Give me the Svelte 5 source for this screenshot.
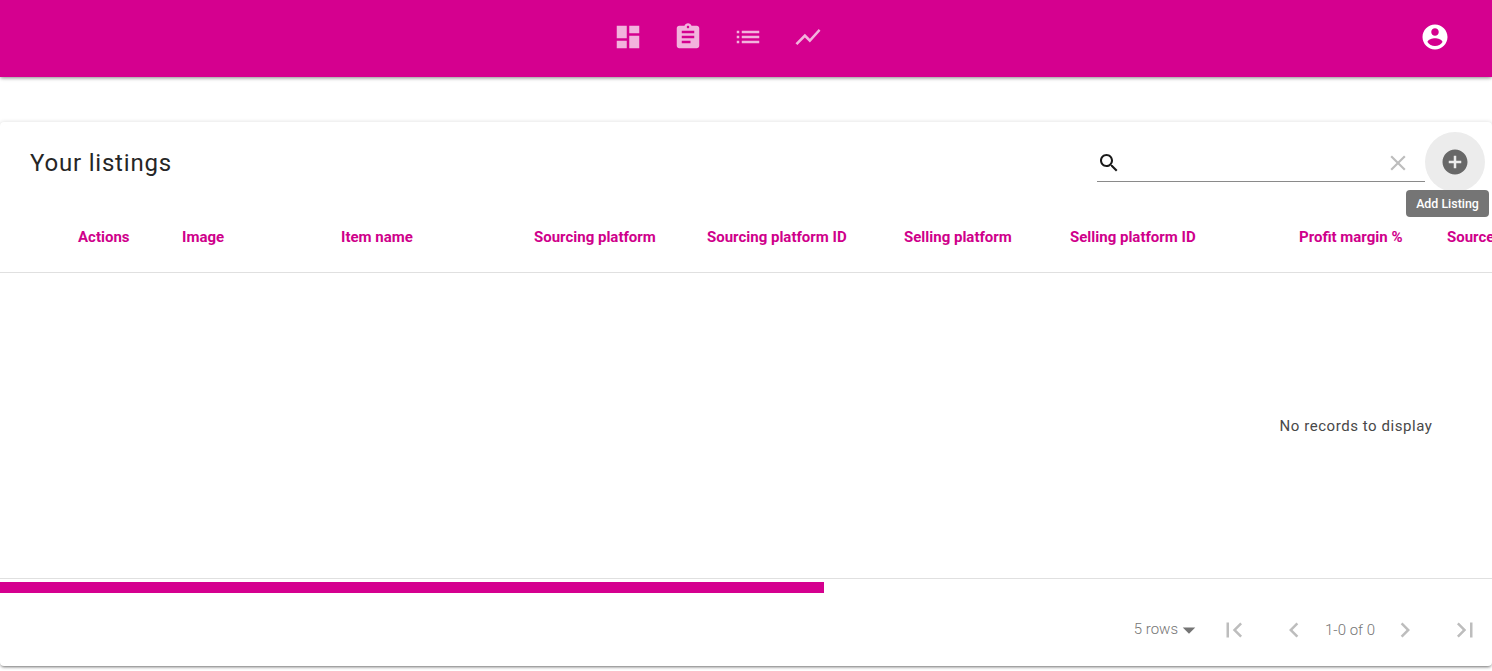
<script>
  const navIcons = [
    'M3 13h8V3H3v10zm0 8h8v-6H3v6zm10 0h8V11h-8v10zm0-18v6h8V3h-8z',
    'M19 3h-4.18C14.4 1.84 13.3 1 12 1c-1.3 0-2.4.84-2.82 2H5c-1.1 0-2 .9-2 2v14c0 1.1.9 2 2 2h14c1.1 0 2-.9 2-2V5c0-1.1-.9-2-2-2zm-7 0c.55 0 1 .45 1 1s-.45 1-1 1-1-.45-1-1 .45-1 1-1zm2 14H7v-2h7v2zm3-4H7v-2h10v2zm0-4H7V7h10v2z',
    'M3 13h2v-2H3v2zm0 4h2v-2H3v2zm0-8h2V7H3v2zm4 4h14v-2H7v2zm0 4h14v-2H7v2zM7 7v2h14V7H7z',
    'M3.5 18.49l6-6.01 4 4L22 6.92l-1.41-1.41-7.09 7.97-4-4L2 16.99z'
  ];

  // width of each column, text starts at its left edge
  const columns = [
    { title: 'Actions', width: 104 },
    { title: 'Image', width: 159 },
    { title: 'Item name', width: 193 },
    { title: 'Sourcing platform', width: 173 },
    { title: 'Sourcing platform ID', width: 197 },
    { title: 'Selling platform', width: 166 },
    { title: 'Selling platform ID', width: 229 },
    { title: 'Profit margin %', width: 148 },
    { title: 'Source price', width: 160 }
  ];
</script>

<header class="appbar">
  <nav class="nav">
    {#each navIcons as d}
      <button class="nav-btn" aria-label="Section">
        <svg viewBox="0 0 24 24" width="30" height="30"><path {d} /></svg>
      </button>
    {/each}
  </nav>
  <button class="account" aria-label="Account">
    <svg viewBox="0 0 24 24" width="30" height="30"><path d="M12 2C6.48 2 2 6.48 2 12s4.48 10 10 10 10-4.48 10-10S17.52 2 12 2zm0 3c1.66 0 3 1.34 3 3s-1.34 3-3 3-3-1.34-3-3 1.34-3 3-3zm0 14.2c-2.5 0-4.71-1.28-6-3.22.03-1.99 4-3.08 6-3.08 1.99 0 5.97 1.09 6 3.08-1.29 1.94-3.5 3.22-6 3.22z" /></svg>
  </button>
</header>

<main class="card">
  <div class="toolbar">
    <h2 class="title">Your listings</h2>
    <div class="search">
      <svg class="search-icon" viewBox="0 0 24 24" width="24" height="24"><path d="M15.5 14h-.79l-.28-.27C15.41 12.59 16 11.11 16 9.5 16 5.91 13.09 3 9.5 3S3 5.91 3 9.5 5.91 16 9.5 16c1.61 0 3.09-.59 4.23-1.57l.27.28v.79l5 4.99L20.49 19l-4.99-5zm-6 0C7.01 14 5 11.99 5 9.5S7.01 5 9.5 5 14 7.01 14 9.5 11.99 14 9.5 14z" /></svg>
      <svg class="clear-icon" viewBox="0 0 24 24" width="26" height="26"><path d="M19 6.41L17.59 5 12 10.59 6.41 5 5 6.41 10.59 12 5 17.59 6.41 19 12 13.41 17.59 19 19 17.59 13.41 12z" /></svg>
    </div>
    <div class="add-wrap">
      <button class="add" aria-label="Add Listing">
        <svg viewBox="0 0 24 24" width="30" height="30"><path d="M12 2C6.48 2 2 6.48 2 12s4.48 10 10 10 10-4.48 10-10S17.52 2 12 2zm5 11h-4v4h-2v-4H7v-2h4V7h2v4h4v2z" /></svg>
      </button>
      <div class="tooltip">Add Listing</div>
    </div>
  </div>

  <div class="scroller">
    <div class="table">
      <div class="head">
        {#each columns as col}
          <div class="th" style="width: {col.width}px">{col.title}</div>
        {/each}
      </div>
      <div class="empty">No records to display</div>
    </div>
  </div>

  <div class="scrollbar"><div class="thumb"></div></div>

  <div class="pagination">
    <span class="rows">5 rows</span>
    <svg class="caret" viewBox="0 0 24 24" width="30" height="30"><path d="M7 10l5 5 5-5z" /></svg>
    <svg class="page-first" viewBox="0 0 24 24" width="30" height="30"><path d="M18.41 16.59L13.82 12l4.59-4.59L17 6l-6 6 6 6zM6 6h2v12H6z" /></svg>
    <svg class="page-prev" viewBox="0 0 24 24" width="30" height="30"><path d="M15.41 7.41L14 6l-6 6 6 6 1.41-1.41L10.83 12z" /></svg>
    <span class="count">1-0 of 0</span>
    <svg class="page-next" viewBox="0 0 24 24" width="30" height="30"><path d="M10 6L8.59 7.41 13.17 12l-4.58 4.59L10 18l6-6z" /></svg>
    <svg class="page-last" viewBox="0 0 24 24" width="30" height="30"><path d="M5.59 7.41L10.18 12l-4.59 4.59L7 18l6-6-6-6zM16 6h2v12h-2z" /></svg>
  </div>
</main>

<style>
  :global(html),
  :global(body) {
    height: 100%;
    overflow: hidden;
  }

  :global(body) {
    margin: 0;
    background: #fff;
    font-family: Roboto, "Liberation Sans", sans-serif;
  }

  button {
    background: none;
    border: none;
    padding: 0;
    cursor: pointer;
    display: flex;
    align-items: center;
    justify-content: center;
  }

  .appbar {
    height: 77px;
    background: #d5008f;
    display: flex;
    align-items: center;
    justify-content: center;
    position: relative;
    box-shadow: 0 2px 4px -1px rgba(0, 0, 0, 0.3), 0 1px 3px rgba(0, 0, 0, 0.2);
  }

  .nav {
    display: flex;
    margin: 0 56px 3px 0;
  }

  .nav-btn {
    width: 60px;
    height: 60px;
  }

  .nav-btn svg {
    fill: #fff;
    opacity: 0.7;
  }

  .account {
    position: absolute;
    right: 42px;
    top: 22px;
  }

  .account svg {
    fill: #fff;
  }

  .card {
    margin-top: 45px;
    height: 544px;
    background: #fff;
    border-radius: 4px;
    box-shadow: 0 2px 3px -1px rgba(0, 0, 0, 0.5), 0 0 4px rgba(0, 0, 0, 0.14);
    display: flex;
    flex-direction: column;
    overflow: hidden;
  }

  .toolbar {
    height: 80px;
    padding: 0 7px 0 30px;
    display: flex;
    align-items: center;
    position: relative;
  }

  .title {
    flex: 1;
    margin: 0;
    padding-top: 2px;
    font-size: 24px;
    font-weight: 400;
    letter-spacing: 0.8px;
    color: #262626;
  }

  .search {
    width: 328px;
    height: 40px;
    box-sizing: border-box;
    border-bottom: 1px solid #8a8a8a;
    display: flex;
    align-items: center;
    justify-content: space-between;
    padding: 3px 14px 0 0;
  }

  .search-icon {
    fill: #1b1b1b;
  }

  .clear-icon {
    fill: #bdbdbd;
  }

  .add-wrap {
    position: relative;
  }

  .add {
    width: 60px;
    height: 60px;
    border-radius: 50%;
    background: #ececec;
  }

  .add svg {
    fill: #686868;
  }

  .tooltip {
    position: absolute;
    top: 58px;
    left: -19px;
    width: 83px;
    height: 27px;
    padding-top: 1px;
    box-sizing: border-box;
    line-height: 26px;
    text-align: center;
    border-radius: 4px;
    background: #757575;
    color: #fff;
    font-size: 12.4px;
    font-weight: 500;
  }

  .scroller {
    flex: 1;
    overflow: hidden;
  }

  .table {
    width: 2710px;
    height: 100%;
    display: flex;
    flex-direction: column;
  }

  .head {
    height: 71px;
    box-sizing: border-box;
    padding-left: 78px;
    display: flex;
    align-items: center;
    border-bottom: 1px solid #e0e0e0;
  }

  .th {
    flex: none;
    white-space: nowrap;
    font-size: 15px;
    font-weight: 700;
    color: #cf008b;
  }

  .empty {
    flex: 1;
    border-bottom: 1px solid #e0e0e0;
    display: flex;
    align-items: center;
    justify-content: center;
    padding: 1px 0 0 2px;
    font-size: 15px;
    letter-spacing: 0.55px;
    color: #484848;
  }

  .scrollbar {
    height: 11px;
    margin-top: 3px;
  }

  .thumb {
    width: 824px;
    height: 100%;
    background: #d5008f;
  }

  .pagination {
    height: 73px;
    display: flex;
    align-items: center;
    padding-right: 12px;
    justify-content: flex-end;
    font-size: 15px;
    font-weight: 300;
    color: #757575;
  }

  .pagination svg {
    fill: #bdbdbd;
  }

  .rows {
    margin: -2px -4px 0 0;
  }

  .pagination .caret {
    fill: #757575;
    margin-right: 15px;
  }

  .page-prev {
    margin-left: 30px;
  }

  .count {
    margin: 0 15px 0 16px;
  }

  .page-last {
    margin-left: 30px;
  }
</style>
